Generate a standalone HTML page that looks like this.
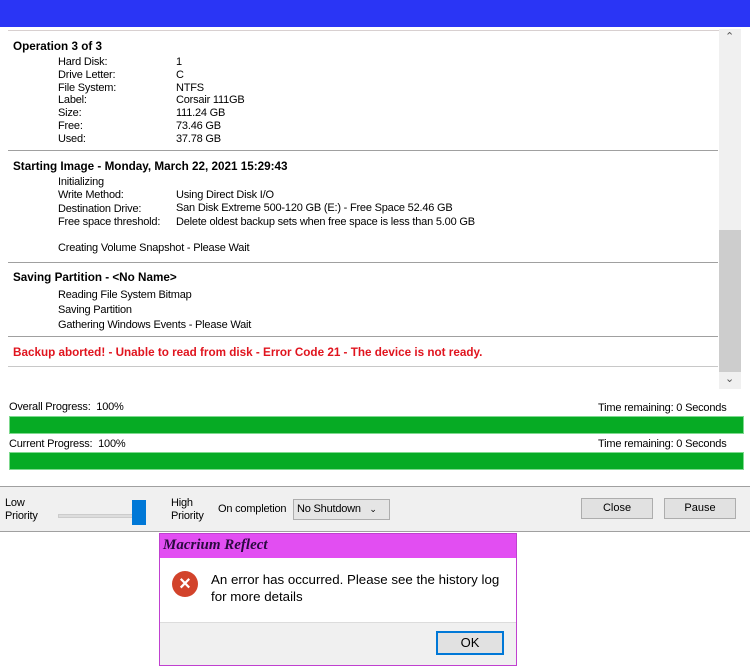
<!DOCTYPE html><html><head><style>
body{margin:0;width:750px;height:665px;background:#fff;position:relative;overflow:hidden;font-family:"Liberation Sans",sans-serif;font-size:11px;color:#000}
.a{position:absolute;white-space:nowrap}
.n{letter-spacing:-0.2px}
.b{font-weight:bold;font-size:11.7px}
.hr{position:absolute;left:8px;width:710px;height:1px;background:#a0a0a0}
.bar{position:absolute;left:9px;width:733px;height:16px;background:#06ab24;border:1px solid #7fd98f}
.btn{position:absolute;height:19px;background:#e1e1e1;border:1px solid #adadad;text-align:center;line-height:19px}
</style></head><body>
<div class="a" style="left:0;top:0;width:750px;height:27px;background:#2a35f5"></div>
<div class="a" style="left:8px;top:30px;width:711px;height:1px;background:#d8d0d0"></div>
<div class="a" style="left:719px;top:29px;width:22px;height:360px;background:#f0f0f0"></div>
<div class="a" style="left:719px;top:230px;width:22px;height:142px;background:#cdcdcd"></div>
<div class="a" style="left:725px;top:30px;font-size:11px;color:#555">&#8963;</div>
<div class="a" style="left:725px;top:372px;font-size:11px;color:#555">&#8964;</div>

<div class="a b" style="left:13px;top:40px">Operation 3 of 3</div>
<div class="a n" style="left:58px;top:56px;line-height:12.8px">Hard Disk:<br>Drive Letter:<br>File System:<br>Label:<br>Size:<br>Free:<br>Used:</div>
<div class="a n" style="left:176px;top:56px;line-height:12.8px">1<br>C<br>NTFS<br>Corsair 111GB<br>111.24 GB<br>73.46 GB<br>37.78 GB</div>
<div class="hr" style="top:150px"></div>
<div class="a b" style="left:13px;top:160px">Starting Image - Monday, March 22, 2021 15:29:43</div>
<div class="a n" style="left:58px;top:176px;line-height:13.3px">Initializing<br>Write Method:<br>Destination Drive:<br>Free space threshold:<br><br>Creating Volume Snapshot - Please Wait</div>
<div class="a n" style="left:176px;top:189px;line-height:13.3px">Using Direct Disk I/O<br>San Disk Extreme 500-120 GB (E:) - Free Space 52.46 GB<br>Delete oldest backup sets when free space is less than 5.00 GB</div>
<div class="hr" style="top:262px"></div>
<div class="a b" style="left:13px;top:271px">Saving Partition - &lt;No Name&gt;</div>
<div class="a n" style="left:58px;top:288px;line-height:15px">Reading File System Bitmap<br>Saving Partition<br>Gathering Windows Events - Please Wait</div>
<div class="hr" style="top:336px"></div>
<div class="a b" style="left:13px;top:346px;color:#e0141e">Backup aborted! - Unable to read from disk - Error Code 21 - The device is not ready.</div>
<div class="hr" style="top:366px;background:#c8c8c8"></div>

<div class="a n" style="left:9px;top:401px">Overall Progress:&nbsp; 100%</div>
<div class="a n" style="left:598px;top:402px">Time remaining: 0 Seconds</div>
<div class="bar" style="top:416px"></div>
<div class="a n" style="left:9px;top:438px">Current Progress:&nbsp; 100%</div>
<div class="a n" style="left:598px;top:438px">Time remaining: 0 Seconds</div>
<div class="bar" style="top:452px"></div>

<div class="a" style="left:0;top:486px;width:750px;height:44px;background:#f0f0f0;border-top:1px solid #a0a0a0;border-bottom:1px solid #a0a0a0"></div>
<div class="a n" style="left:5px;top:497px;line-height:13px">Low<br>Priority</div>
<div class="a" style="left:58px;top:514px;width:80px;height:2px;background:#ddd;border:1px solid #ccc"></div>
<div class="a" style="left:132px;top:500px;width:14px;height:25px;background:#0078d7"></div>
<div class="a n" style="left:171px;top:497px;line-height:13px">High<br>Priority</div>
<div class="a n" style="left:218px;top:503px">On completion</div>
<div class="a n" style="left:293px;top:499px;width:92px;height:19px;background:#e5e5e5;border:1px solid #adadad;line-height:19px;padding-left:3px;box-sizing:content-box">No Shutdown&nbsp;&nbsp; <span style="font-size:9px">&#8964;</span></div>
<div class="btn" style="left:581px;top:498px;width:70px">Close</div>
<div class="btn" style="left:664px;top:498px;width:70px">Pause</div>

<div class="a" style="left:159px;top:533px;width:356px;height:131px;border:1px solid #c040d0;background:#f0f0f0"></div>
<div class="a" style="left:160px;top:534px;width:356px;height:24px;background:#e24ef2"></div>
<div class="a" style="left:163px;top:537px;font-family:'Liberation Serif',serif;font-style:italic;font-weight:bold;font-size:15px;color:#2a0a40">Macrium Reflect</div>
<div class="a" style="left:160px;top:558px;width:356px;height:64px;background:#fff;border-bottom:1px solid #dcdcdc"></div>
<div class="a" style="left:172px;top:571px;width:26px;height:26px;border-radius:50%;background:#d2432b;color:#fff;text-align:center;line-height:26px;font-size:20px;font-weight:bold">&#215;</div>
<div class="a" style="left:211px;top:571px;font-size:13.3px;line-height:17px">An error has occurred. Please see the history log<br>for more details</div>
<div class="a" style="left:436px;top:631px;width:64px;height:20px;background:#e1e1e1;border:2px solid #0078d7;text-align:center;line-height:20px;font-size:13px">OK</div>
</body></html>
